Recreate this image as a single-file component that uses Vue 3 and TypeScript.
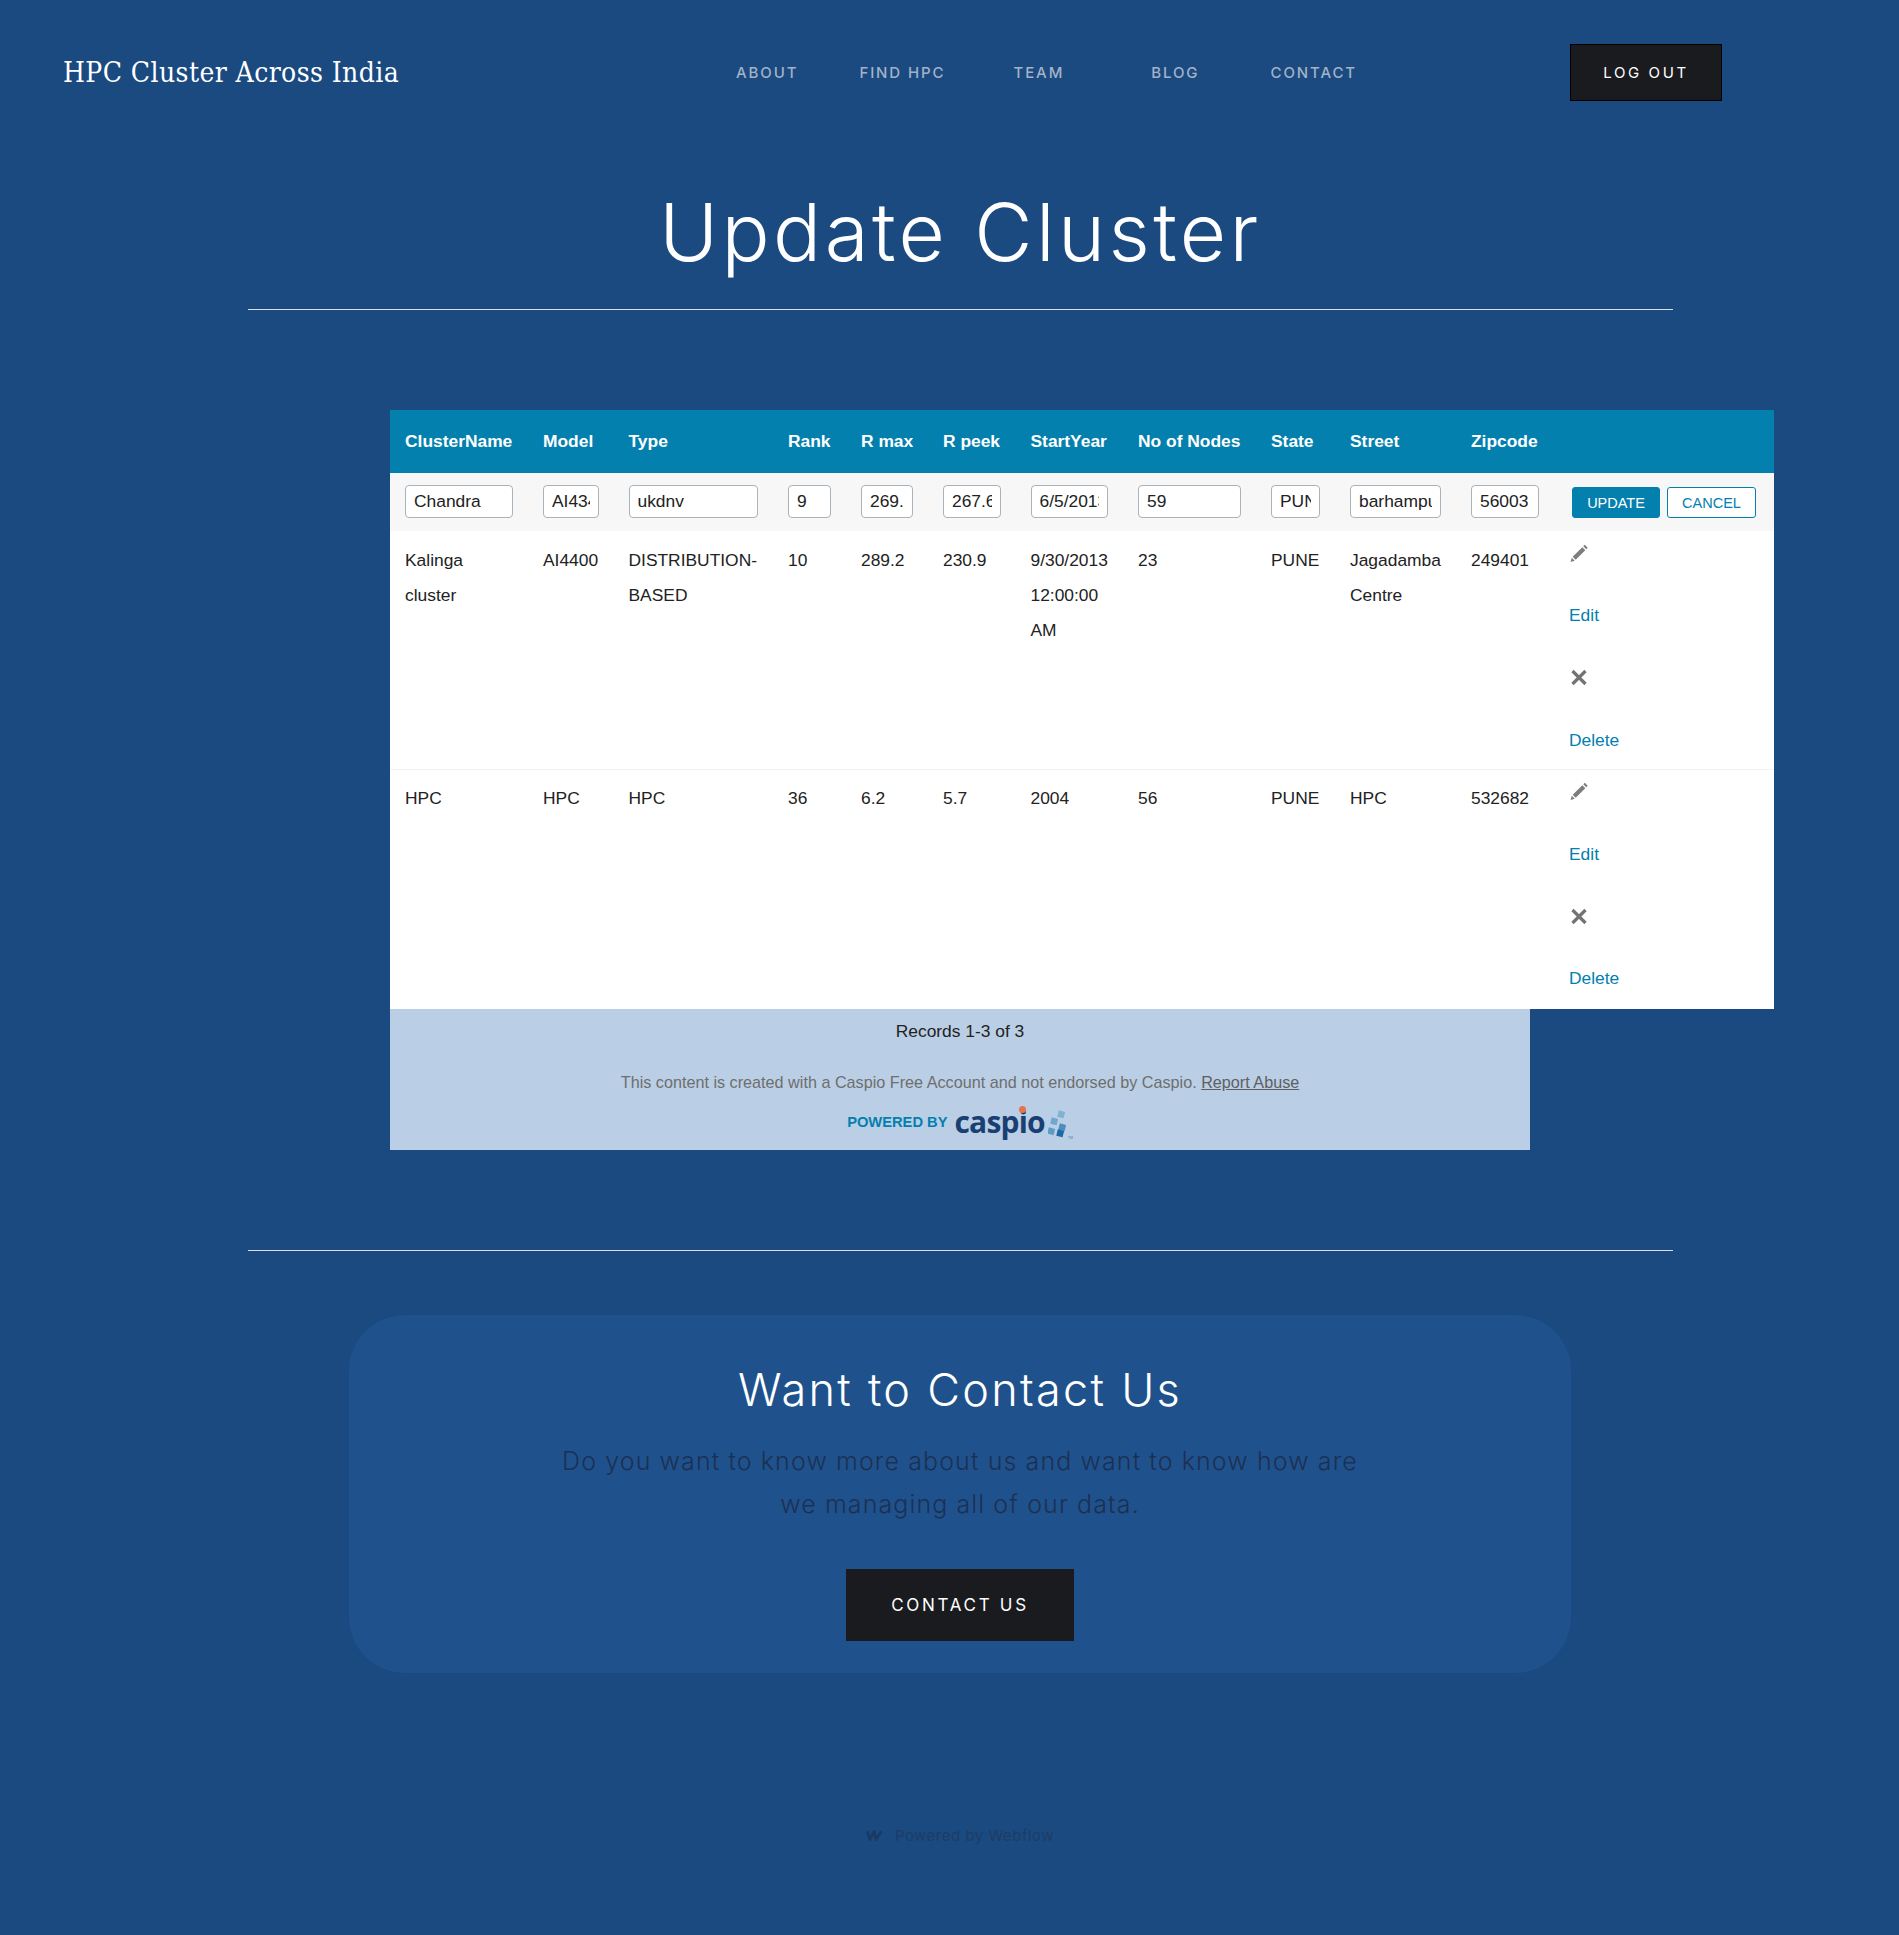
<template>
  <div class="page">
    <nav class="navbar">
      <a class="brand">HPC Cluster Across India</a>
      <div class="nav-links">
        <a v-for="link in navLinks" :key="link" class="nav-link">{{ link }}</a>
      </div>
      <a class="btn-logout">LOG OUT</a>
    </nav>

    <section class="update-section">
      <h1 class="title">Update Cluster</h1>
      <hr class="rule" />

      <div class="data-page">
        <table class="cluster-table">
          <colgroup>
            <col v-for="col in columns" :key="col.label" :style="{ width: col.width + 'px' }" />
            <col :style="{ width: '220px' }" />
          </colgroup>
          <thead>
            <tr>
              <th v-for="col in columns" :key="col.label">{{ col.label }}</th>
              <th></th>
            </tr>
          </thead>
          <tbody>
            <tr class="edit-row">
              <td v-for="(val, i) in editValues" :key="i">
                <input class="cell-input" type="text" readonly :value="val" />
              </td>
              <td class="edit-actions">
                <button class="btn-update">UPDATE</button>
                <button class="btn-cancel">CANCEL</button>
              </td>
            </tr>
            <tr v-for="row in rows" :key="row.id" class="data-row">
              <td v-for="(val, i) in row.cells" :key="i">{{ val }}</td>
              <td class="actions">
                <svg class="ico" viewBox="0 0 18 18" width="18" height="18">
                  <path d="M2.7 12.3 12.300 2.700 15.300 5.700 5.700 15.300ZM1.800 13.300 4.700 16.200 .5 17.500ZM13.300 1.800 14.800 .3 17.700 3.200 16.200 4.700Z" fill="#7d7d7d" />
                </svg>
                <a class="action-link">Edit</a>
                <svg class="ico" viewBox="0 0 18 18" width="18" height="18">
                  <path d="M2.5 2.5 15.5 15.5M15.5 2.5 2.5 15.5" stroke="#737373" stroke-width="3.2" fill="none" />
                </svg>
                <a class="action-link">Delete</a>
              </td>
            </tr>
          </tbody>
        </table>

        <div class="dp-footer">
          <div class="records">Records 1-3 of 3</div>
          <div class="notice">
            This content is created with a Caspio Free Account and not endorsed by Caspio.
            <a class="report">Report Abuse</a>
          </div>
          <div class="powered">
            <span class="powered-label">POWERED BY</span>
            <span class="caspio-word">caspio<i class="caspio-dot"></i></span>
            <svg class="caspio-mark" viewBox="0 0 25 36" width="25" height="36">
              <rect x="3" y="1" width="6.5" height="6.5" transform="rotate(14 6 4)" fill="#b4d2e6" />
              <rect x="10" y="7" width="6.5" height="6.5" transform="rotate(14 13 10)" fill="#7fb2d4" />
              <rect x="3" y="14" width="6.5" height="6.5" transform="rotate(14 6 17)" fill="#6fa7cf" />
              <rect x="11" y="20" width="6.5" height="6.5" transform="rotate(14 14 23)" fill="#4c8dbf" />
              <rect x="0" y="24" width="6.5" height="6.5" transform="rotate(14 3 27)" fill="#5e9cc8" />
              <rect x="9" y="26" width="6.5" height="6.5" transform="rotate(14 12 29)" fill="#1d6aa6" />
              <text x="20" y="35" font-size="3.5" fill="#5c7a96" font-family="Liberation Sans">TM</text>
            </svg>
          </div>
        </div>
      </div>

      <hr class="rule rule-bottom" />
    </section>

    <section class="contact">
      <h2 class="contact-title">Want to Contact Us</h2>
      <p class="contact-text">Do you want to know more about us and want to know how are<br />we managing all of our data.</p>
      <a class="btn-contact">CONTACT US</a>
    </section>

    <footer class="webflow">
      <svg viewBox="0 0 17 11" width="17" height="11">
        <path d="M1 1.2 4 9.5 8.2 1.2 9.8 9.5 15.6 1.2" fill="none" stroke="#1c3a61" stroke-width="2.6" />
      </svg>
      <span>Powered by Webflow</span>
    </footer>
  </div>
</template>

<script setup lang="ts">
interface Column {
  label: string
  width: number
}

interface Row {
  id: number
  cells: string[]
}

const navLinks = ['ABOUT', 'FIND HPC', 'TEAM', 'BLOG', 'CONTACT']

const columns: Column[] = [
  { label: 'ClusterName', width: 138 },
  { label: 'Model', width: 85.5 },
  { label: 'Type', width: 159.5 },
  { label: 'Rank', width: 73 },
  { label: 'R max', width: 82 },
  { label: 'R peek', width: 87.5 },
  { label: 'StartYear', width: 107.5 },
  { label: 'No of Nodes', width: 133 },
  { label: 'State', width: 79 },
  { label: 'Street', width: 121 },
  { label: 'Zipcode', width: 98 },
]

const editValues = ['Chandra', 'AI4340', 'ukdnv', '9', '269.1', '267.6', '6/5/2013', '59', 'PUNE', 'barhampur', '56003']

const rows: Row[] = [
  {
    id: 1,
    cells: ['Kalinga cluster', 'AI4400', 'DISTRIBUTION-BASED', '10', '289.2', '230.9', '9/30/2013 12:00:00 AM', '23', 'PUNE', 'Jagadamba Centre', '249401'],
  },
  {
    id: 2,
    cells: ['HPC', 'HPC', 'HPC', '36', '6.2', '5.7', '2004', '56', 'PUNE', 'HPC', '532682'],
  },
]
</script>

<style>
html,
body {
  margin: 0;
  background: #1a4a80;
  overflow-x: hidden;
}
</style>

<style scoped>
.page {
  width: 1920px;
  height: 1935px;
  background: #1a4a80;
  overflow: hidden;
  font-family: Inter, "Open Sans", sans-serif;
}

.navbar {
  display: flex;
  align-items: center;
  height: 145px;
  padding-left: 63px;
}

.brand {
  width: 673px;
  margin-top: -1px;
  font-family: "DejaVu Serif", serif;
  font-stretch: condensed;
  font-size: 28px;
  letter-spacing: 0.4px;
  color: #fff;
  white-space: nowrap;
}

.nav-links {
  display: flex;
  width: 834px;
}

.nav-link {
  font-size: 15px;
  font-weight: 500;
  letter-spacing: 1.9px;
  color: #a3b2c8;
  white-space: nowrap;
}

.nav-link:nth-child(2) { margin-left: 61px; }
.nav-link:nth-child(3) { margin-left: 68px; }
.nav-link:nth-child(4) { margin-left: 87px; }
.nav-link:nth-child(5) { margin-left: 71px; }

.btn-logout {
  box-sizing: border-box;
  width: 152px;
  height: 57px;
  line-height: 55px;
  text-align: center;
  background: #1a1b1f;
  border: 1px solid #000;
  color: #fff;
  font-size: 15px;
  letter-spacing: 2.6px;
}

.update-section {
  width: 1425px;
  margin-left: 248px;
}

.title {
  margin: 0;
  height: 164px;
  line-height: 174px;
  text-align: center;
  font-size: 80px;
  font-weight: 350;
  letter-spacing: 3.4px;
  color: #fff;
}

.rule {
  margin: 0;
  border: 0;
  border-top: 1px solid #d7e0ea;
}

.rule-bottom {
  margin-top: 100px;
}

.data-page {
  width: 1140px;
  margin: 100px 0 0 142px;
  font-family: "Liberation Sans", Arial, sans-serif;
  font-size: 17.4px;
  color: #222;
}

.cluster-table {
  width: 1384px;
  table-layout: fixed;
  border-collapse: collapse;
  background: #fff;
}

.cluster-table th {
  height: 63px;
  padding: 0 0 0 15px;
  background: #0380ae;
  color: #fff;
  font-weight: 700;
  text-align: left;
  white-space: nowrap;
}

.edit-row td {
  height: 58px;
  padding: 0 15px 1px;
  background: #f7f7f7;
  box-sizing: border-box;
}

.cell-input {
  display: block;
  box-sizing: border-box;
  width: 100%;
  height: 33px;
  padding: 0 8px;
  border: 1px solid #a9b3bb;
  border-radius: 4px;
  background: #fff;
  color: #222;
  font: inherit;
  outline: none;
}

.edit-actions {
  white-space: nowrap;
}

.edit-row .edit-actions {
  padding: 1px 0 0 18px;
}

.btn-update,
.btn-cancel {
  box-sizing: border-box;
  width: 88px;
  height: 31px;
  padding: 0;
  border: 1px solid #0380ae;
  border-radius: 3px;
  font-family: inherit;
  font-size: 14.5px;
}

.btn-update {
  background: #0380ae;
  color: #fff;
}

.btn-cancel {
  width: 89px;
  margin-left: 7px;
  background: #fff;
  color: #0380ae;
}

.data-row td {
  padding: 11.5px 15px 0;
  line-height: 35px;
  vertical-align: top;
  border-bottom: 1px solid #f2f2f2;
}

.data-row:last-child td {
  padding-top: 10.5px;
  border-bottom: 0;
}

.data-row .actions,
.data-row:last-child .actions {
  display: flex;
  flex-direction: column;
  align-items: flex-start;
  gap: 27.4px;
  padding: 4.5px 15px 11px;
}

.data-row:last-child .actions {
  padding: 4.5px 15px 13px;
}

.ico {
  display: block;
  height: 35px;
  margin-left: 1px;
}

.action-link {
  color: #0380ae;
}

.dp-footer {
  height: 141px;
  background: #bacfe5;
  text-align: center;
}

.records {
  padding-top: 5px;
  line-height: 35px;
}

.notice {
  margin-top: 16px;
  line-height: 35px;
  font-size: 16.2px;
  color: #6e6e6e;
}

.report {
  color: #5f5f5f;
  text-decoration: underline;
}

.powered {
  display: flex;
  align-items: center;
  justify-content: center;
  height: 40px;
  margin-top: 2px;
}

.powered-label {
  font-size: 14.7px;
  font-weight: 700;
  color: #0380ae;
}

.caspio-word {
  position: relative;
  margin-left: 7px;
  font-family: "Open Sans", sans-serif;
  font-size: 30px;
  font-weight: 700;
  line-height: 36px;
  letter-spacing: -0.8px;
  color: #1a3f73;
}

.caspio-dot {
  position: absolute;
  left: 64px;
  top: 2px;
  width: 7px;
  height: 7px;
  border-radius: 50%;
  background: #e8734a;
}

.caspio-mark {
  display: block;
  margin-left: 3px;
}

.contact {
  box-sizing: border-box;
  width: 1222px;
  height: 358px;
  margin: 64px auto 0;
  padding-top: 46px;
  border-radius: 56px;
  background: #1f528c;
  text-align: center;
}

.contact-title {
  margin: 0;
  line-height: 58px;
  font-size: 45px;
  font-weight: 350;
  letter-spacing: 2.3px;
  color: #fff;
}

.contact-text {
  margin: 21px 0 0;
  line-height: 43px;
  font-size: 25px;
  font-weight: 300;
  letter-spacing: 1.1px;
  color: #1c3054;
}

.btn-contact {
  display: block;
  width: 228px;
  height: 72px;
  margin: 43px auto 0;
  line-height: 72px;
  background: #1a1b1f;
  color: #fff;
  font-size: 17px;
  letter-spacing: 2.7px;
}

.webflow {
  display: flex;
  align-items: center;
  justify-content: center;
  gap: 12px;
  margin-top: 151px;
  height: 22px;
  font-size: 15px;
  letter-spacing: 0.5px;
  color: #1f3c65;
}
</style>
